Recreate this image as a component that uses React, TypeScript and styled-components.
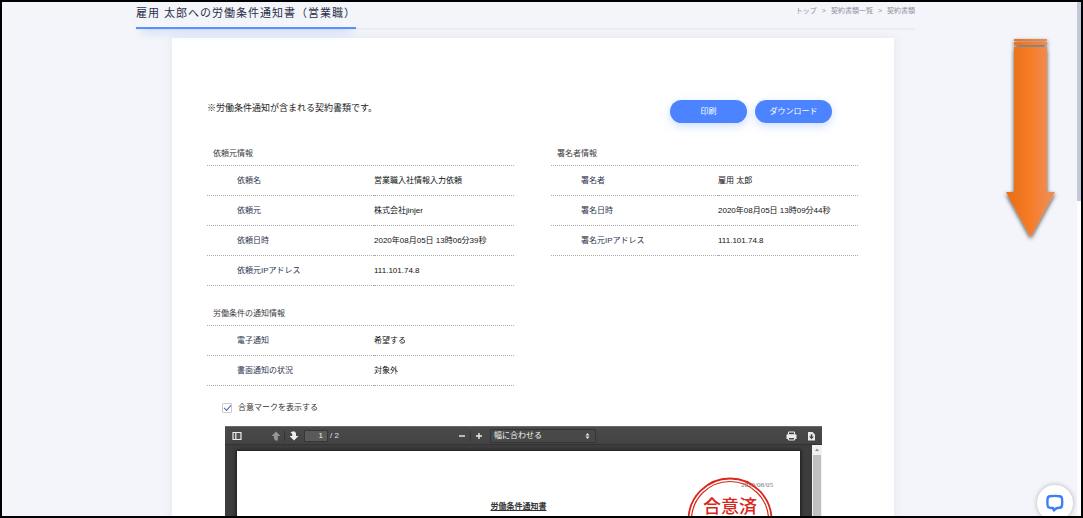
import React from "react";
import styled, { createGlobalStyle } from "styled-components";

const GlobalStyle = createGlobalStyle`
  *, *::before, *::after { box-sizing: border-box; }
  body {
    margin: 0;
    background: #f4f5fa;
    font-family: "Liberation Sans", "Noto Sans CJK JP", sans-serif;
    font-size: 8px;
    line-height: 16px;
    color: #333;
  }
`;

const Frame = styled.div`
  position: relative;
  display: flex;
  height: 100vh;
  border: 2px solid #000;
  background: #f4f5fa;
  overflow: hidden;
`;

const Main = styled.main`
  flex: 1;
  min-width: 0;
  padding: 0 162px 0 134px;
`;

const PageScroll = styled.div`
  width: 4px;
  background: #fdfdfe;
`;

const PageThumb = styled.div`
  height: 199px;
  background: #c3c7dc;
`;

const Header = styled.header`
  display: flex;
  justify-content: space-between;
  align-items: flex-start;
  border-bottom: 2px solid #ebecf2;
`;

const Title = styled.h1`
  margin: 0 0 -1px;
  padding: 1px 0 4px;
  border-bottom: 2px solid #5b8ffb;
  box-shadow: 0 10px 8px -5px rgba(91, 143, 251, 0.18);
  font-size: 11px;
  letter-spacing: 1px;
  line-height: 20px;
  font-weight: 400;
  color: #2b3048;
  white-space: nowrap;
`;

const Breadcrumb = styled.nav`
  display: flex;
  gap: 5px;
  padding-top: 1px;
  font-size: 7px;
  color: #8f919c;
  white-space: nowrap;
`;

const CrumbLink = styled.a`
  color: inherit;
  text-decoration: none;
`;

const Card = styled.section`
  margin: 8px 21px 0 36px;
  padding: 62px 36px 0 35px;
  background: #fff;
  box-shadow: 0 0 10px rgba(40, 60, 130, 0.08);
`;

const Intro = styled.div`
  display: flex;
  justify-content: space-between;
  align-items: flex-start;
  padding-right: 26px;
`;

const Note = styled.p`
  margin: 0;
  font-size: 9px;
  color: #222;
`;

const Actions = styled.div`
  display: flex;
  gap: 8px;
`;

const PillButton = styled.button`
  width: 77px;
  height: 23px;
  padding: 0;
  border: 0;
  border-radius: 12px;
  background: #4c84ff;
  box-shadow: 0 3px 10px rgba(76, 132, 255, 0.28);
  color: #fff;
  font: inherit;
`;

const Columns = styled.div`
  display: grid;
  grid-template-columns: 1fr 1fr;
  column-gap: 37px;
  align-items: start;
  margin-top: 18px;
`;

const Stack = styled.div`
  display: grid;
  row-gap: 15px;
`;

const InfoTable = styled.table`
  width: 100%;
  table-layout: fixed;
  border-collapse: separate;
  border-spacing: 0;
`;

const Caption = styled.caption`
  padding: 2px 0 0 6px;
  border-bottom: 1px dotted #aaa;
  text-align: left;
  line-height: 22px;
  color: #3c3c42;
`;

const LabelCell = styled.th`
  width: 167px;
  padding: 0 0 0 30px;
  border-bottom: 1px dotted #aaa;
  text-align: left;
  font-weight: 400;
  line-height: 29px;
  color: #303650;
`;

const ValueCell = styled.td`
  padding: 0;
  border-bottom: 1px dotted #aaa;
  line-height: 29px;
  color: #111;
`;

const CheckLabel = styled.label`
  display: flex;
  width: fit-content;
  align-items: center;
  gap: 6px;
  margin: 14px 0 0 15px;
`;

const CheckBox = styled.input`
  appearance: none;
  display: grid;
  place-items: center;
  width: 10px;
  height: 10px;
  margin: 0;
  border: 1px solid #c9ccd6;
  border-radius: 1px;
  background: #fff;

  &:checked::before {
    content: "";
    width: 7px;
    height: 4px;
    border-left: 1px solid #4a66ad;
    border-bottom: 1px solid #4a66ad;
    transform: translateY(-1px) rotate(-48deg);
  }
`;

const Viewer = styled.div`
  margin: 10px 36px 0 18px;
  background: #3d3d3d;
`;

const Toolbar = styled.div`
  display: grid;
  grid-template-columns: 1fr auto 1fr;
  align-items: center;
  height: 19px;
  padding: 0 6px 0 7px;
  border-top: 1px solid #6a6a6a;
  border-bottom: 1px solid #333;
  background: linear-gradient(#4a4a4a, #434343);
  color: #e4e4e4;
`;

const ToolGroup = styled.div<{ $end?: boolean }>`
  display: flex;
  align-items: center;
  justify-content: ${(p) => (p.$end ? "flex-end" : "flex-start")};
  gap: ${(p) => (p.$end ? "10px" : "2px")};
`;

const ToolButton = styled.button<{ $dim?: boolean; $spaced?: boolean }>`
  display: flex;
  padding: 0;
  margin-right: ${(p) => (p.$spaced ? "24px" : "0")};
  border: 0;
  background: none;
  color: ${(p) => (p.$dim ? "#969696" : "#ececec")};
`;

const Separator = styled.span`
  width: 1px;
  height: 10px;
  background: #333;
`;

const PageInput = styled.input`
  width: 24px;
  height: 12px;
  margin-left: 3px;
  padding: 0 4px 0 0;
  border: 1px solid #363636;
  background: #5a5a5a;
  color: #f0f0f0;
  font: inherit;
  text-align: right;
`;

const ZoomGroup = styled.div`
  display: flex;
  align-items: center;
  gap: 4px;
`;

const SelectWrap = styled.span`
  display: flex;
  align-items: center;
  margin-left: 3px;
`;

const ZoomSelect = styled.select`
  appearance: none;
  width: 106px;
  height: 14px;
  margin-right: -11px;
  padding: 0 12px 0 3px;
  border: 1px solid #353535;
  border-radius: 1px;
  background: #484848;
  color: #f2f2f2;
  font: inherit;
  line-height: 12px;
`;

const SelectArrows = styled.svg`
  position: relative;
  width: 5px;
  height: 6px;
  pointer-events: none;
`;

const Stage = styled.div`
  display: flex;
  background: #3d3d3d;
`;

const Paper = styled.article`
  position: relative;
  flex: 1;
  height: 320px;
  margin: 6px 12px 0;
  padding: 26px 27px 0;
  background: #fff;
  box-shadow: 0 0 3px 1px #1c1c1c;
`;

const PaperDate = styled.div`
  text-align: right;
  font-family: "Liberation Serif", serif;
  font-size: 7px;
  color: #777;
`;

const PaperTitle = styled.h2`
  margin: 6px 0 0;
  text-align: center;
  font-size: 8px;
  font-weight: 700;
  text-decoration: underline;
  color: #333;
`;

const Stamp = styled.svg`
  position: absolute;
  top: 26px;
  right: 27px;
  width: 86px;
  height: 86px;
`;

const InnerScroll = styled.div`
  display: flex;
  flex-direction: column;
  align-items: center;
  width: 10px;
  background: #f1f1f1;
`;

const InnerThumb = styled.div`
  width: 8px;
  height: 160px;
  background: #c1c1c1;
`;

const GuideArrow = styled.svg`
  position: absolute;
  top: 32px;
  right: 20px;
  width: 60px;
  height: 214px;
`;

const ChatButton = styled.button`
  position: absolute;
  right: 8px;
  bottom: -5px;
  display: grid;
  place-items: center;
  width: 36px;
  height: 36px;
  padding: 0;
  border: 0;
  border-radius: 50%;
  background: #fff;
  box-shadow: 0 0 5px rgba(0, 0, 0, 0.28);
`;

type Row = [string, string];

const requestRows: Row[] = [
  ["依頼名", "営業職入社情報入力依頼"],
  ["依頼元", "株式会社jinjer"],
  ["依頼日時", "2020年08月05日 13時06分39秒"],
  ["依頼元IPアドレス", "111.101.74.8"],
];

const noticeRows: Row[] = [
  ["電子通知", "希望する"],
  ["書面通知の状況", "対象外"],
];

const signerRows: Row[] = [
  ["署名者", "雇用 太郎"],
  ["署名日時", "2020年08月05日 13時09分44秒"],
  ["署名元IPアドレス", "111.101.74.8"],
];

function Info({ title, rows }: { title: string; rows: Row[] }) {
  return (
    <InfoTable>
      <Caption>{title}</Caption>
      <tbody>
        {rows.map(([label, value]) => (
          <tr key={label}>
            <LabelCell scope="row">{label}</LabelCell>
            <ValueCell>{value}</ValueCell>
          </tr>
        ))}
      </tbody>
    </InfoTable>
  );
}

function PdfToolbar() {
  return (
    <Toolbar>
      <ToolGroup>
        <ToolButton $spaced aria-label="サイドバー">
          <svg width="10" height="10" viewBox="0 0 10 10">
            <path d="M1 1.5h8v7H1z" fill="#555" stroke="currentColor" strokeWidth="1.2" />
            <path d="M3.8 1.5v7" stroke="currentColor" strokeWidth="1.2" />
          </svg>
        </ToolButton>
        <ToolButton $dim aria-label="前のページ">
          <svg width="14" height="10" viewBox="0 0 14 10">
            <path d="M8 .5L12.5 5H9.8V9.5H7.2L6 7.8V5H3.5z" fill="currentColor" />
          </svg>
        </ToolButton>
        <Separator />
        <ToolButton aria-label="次のページ">
          <svg width="12" height="10" viewBox="0 0 12 10">
            <path d="M7 9.5L11.5 5H9V2.2L7.8.5H5.2L3.5 1.5 5.2 3V5H2.5z" fill="currentColor" />
          </svg>
        </ToolButton>
        <PageInput aria-label="ページ" defaultValue="1" />
        <span>/ 2</span>
      </ToolGroup>
      <ZoomGroup>
        <ToolButton aria-label="縮小">
          <svg width="8" height="8" viewBox="0 0 8 8">
            <path d="M1 4h6" stroke="currentColor" strokeWidth="1.4" />
          </svg>
        </ToolButton>
        <Separator />
        <ToolButton aria-label="拡大">
          <svg width="8" height="8" viewBox="0 0 8 8">
            <path d="M1 4h6M4 1v6" stroke="currentColor" strokeWidth="1.4" />
          </svg>
        </ToolButton>
        <SelectWrap>
          <ZoomSelect aria-label="表示倍率">
            <option>幅に合わせる</option>
          </ZoomSelect>
          <SelectArrows viewBox="0 0 5 6">
            <path d="M2.5 0L4.5 2.5H.5zM2.5 6L.5 3.5h4z" fill="#e6e6e6" />
          </SelectArrows>
        </SelectWrap>
      </ZoomGroup>
      <ToolGroup $end>
        <ToolButton aria-label="印刷する">
          <svg width="11" height="10" viewBox="0 0 11 10">
            <path d="M2.5 3.5V1h6v2.5" fill="none" stroke="currentColor" />
            <path d="M1.5 3.2h8q1 0 1 1V8h-2V6.2h-6V8h-2V4.2q0-1 1-1z" fill="currentColor" />
            <path d="M2.5 6.5h6V9h-6z" fill="none" stroke="currentColor" />
          </svg>
        </ToolButton>
        <ToolButton aria-label="保存">
          <svg width="9" height="10" viewBox="0 0 9 10">
            <path d="M1 1h4.5L8 3.5V9.5H1z" fill="currentColor" />
            <path d="M3.7 3.2h1.6V5.5H7L4.5 8.3 2 5.5h1.7z" fill="#444" />
          </svg>
        </ToolButton>
      </ToolGroup>
    </Toolbar>
  );
}

export default function App() {
  return (
    <>
      <GlobalStyle />
      <Frame>
        <Main>
          <Header>
            <Title>雇用 太郎への労働条件通知書（営業職）</Title>
            <Breadcrumb aria-label="パンくず">
              <CrumbLink href="#top">トップ</CrumbLink>
              <span>&gt;</span>
              <CrumbLink href="#documents">契約書類一覧</CrumbLink>
              <span>&gt;</span>
              <span>契約書類</span>
            </Breadcrumb>
          </Header>

          <Card>
            <Intro>
              <Note>※労働条件通知が含まれる契約書類です。</Note>
              <Actions>
                <PillButton>印刷</PillButton>
                <PillButton>ダウンロード</PillButton>
              </Actions>
            </Intro>

            <Columns>
              <Stack>
                <Info title="依頼元情報" rows={requestRows} />
                <Info title="労働条件の通知情報" rows={noticeRows} />
              </Stack>
              <Info title="署名者情報" rows={signerRows} />
            </Columns>

            <CheckLabel>
              <CheckBox type="checkbox" defaultChecked />
              合意マークを表示する
            </CheckLabel>

            <Viewer>
              <PdfToolbar />
              <Stage>
                <Paper>
                  <PaperDate>2020/08/05</PaperDate>
                  <PaperTitle>労働条件通知書</PaperTitle>
                  <Stamp viewBox="0 0 86 86" fill="none" stroke="#d8281c">
                    <circle cx="43" cy="43" r="41.5" strokeWidth="1.8" />
                    <circle cx="43" cy="43" r="38.5" strokeWidth="1.2" />
                    <text
                      x="43"
                      y="36"
                      textAnchor="middle"
                      fontFamily="'Noto Sans CJK JP', sans-serif"
                      fontSize="18"
                      fontWeight="500"
                      fill="#d8281c"
                      stroke="none"
                    >
                      合意済
                    </text>
                  </Stamp>
                </Paper>
                <InnerScroll>
                  <svg width="10" height="10" viewBox="0 0 10 10">
                    <path d="M5 3.5L7 6H3z" fill="#8a8a8a" />
                  </svg>
                  <InnerThumb />
                </InnerScroll>
              </Stage>
            </Viewer>
          </Card>
        </Main>

        <PageScroll>
          <PageThumb />
        </PageScroll>

        <GuideArrow viewBox="0 0 60 214">
          <defs>
            <linearGradient id="shaft" x1="0" x2="1" y1="0" y2="0">
              <stop offset="0.1" stopColor="#e96f18" />
              <stop offset="0.5" stopColor="#f67c28" />
              <stop offset="0.85" stopColor="#f08b50" />
            </linearGradient>
            <filter id="drop" x="-30%" y="-10%" width="160%" height="120%">
              <feDropShadow dx="0" dy="2" stdDeviation="2" floodColor="#000" floodOpacity="0.7" />
            </filter>
          </defs>
          <path
            d="M13 5h33v2H13zM13 8h33v3H13zM13 13h33v145h8L29.5 203 5 158h8z"
            fill="url(#shaft)"
            filter="url(#drop)"
          />
        </GuideArrow>

        <ChatButton aria-label="チャット">
          <svg width="20" height="20" viewBox="0 0 20 20">
            <path
              d="M8.8 17.4L8 15L5 14.8Q2.8 14.6 2.6 12.5Q2.2 9 2.6 5.5Q2.8 3.5 5 3.2Q10 2.6 14.5 3.2Q16.8 3.5 17 5.5Q17.4 9 17 12.5Q16.8 14.6 14.5 14.8L12.2 15Q10.4 15.4 8.8 17.4Z"
              fill="none"
              stroke="#3f7ff5"
              strokeWidth="2.4"
              strokeLinejoin="round"
            />
          </svg>
        </ChatButton>
      </Frame>
    </>
  );
}
